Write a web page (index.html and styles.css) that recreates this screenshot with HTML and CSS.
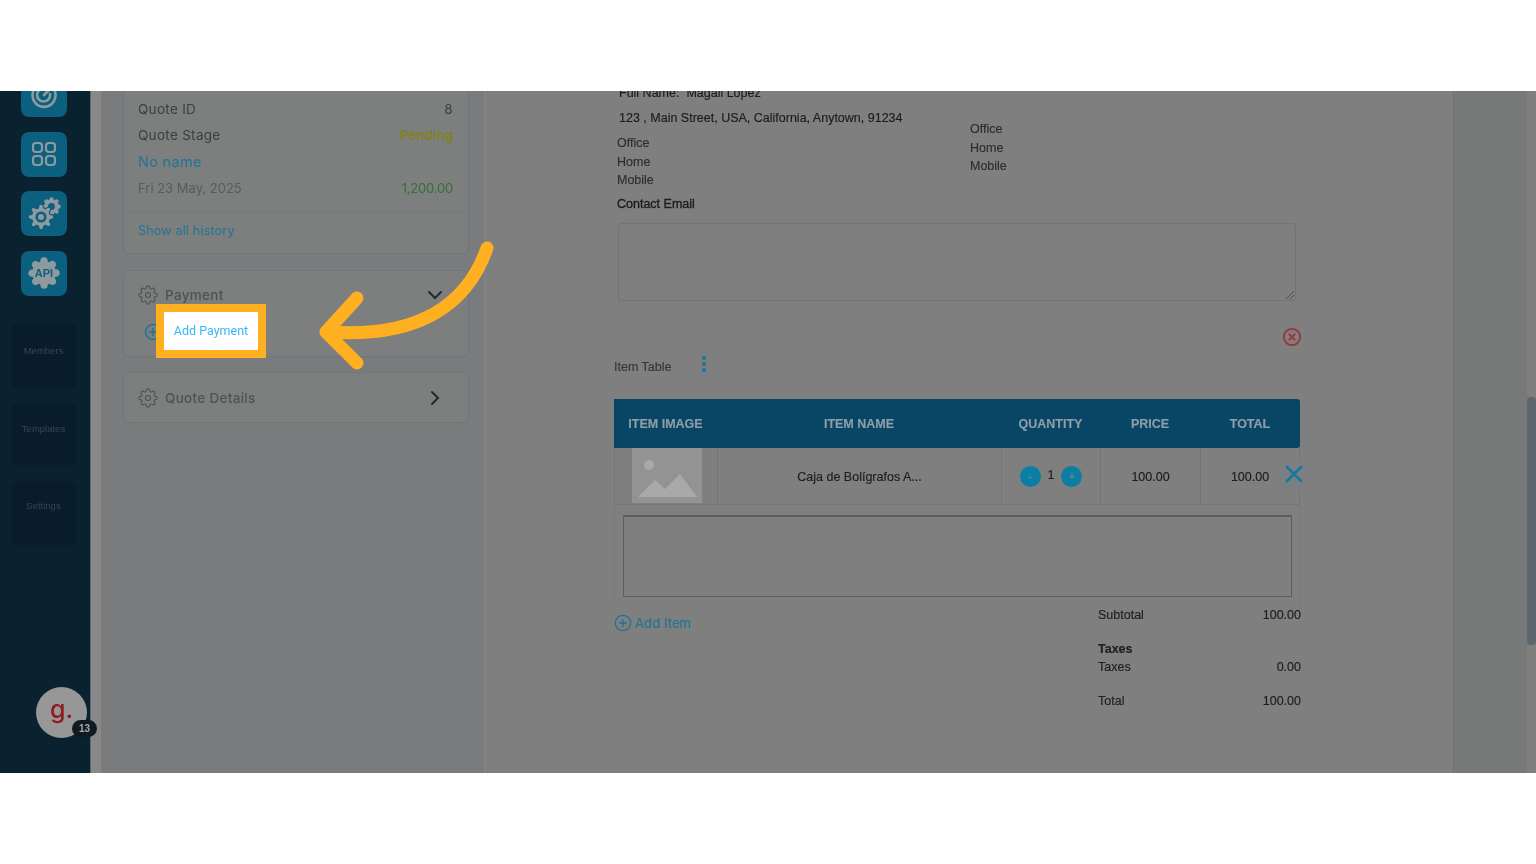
FILE: index.html
```html
<!DOCTYPE html>
<html lang="en">
<head>
  <meta charset="UTF-8">
  <title>Quote - Add Payment</title>
  <link rel="stylesheet" href="styles.css">
</head>
<body>

  <svg class="defs" width="0" height="0">
    <symbol id="gear" viewBox="0 0 24 24">
      <path d="M19.4 15a1.65 1.65 0 0 0 .33 1.82l.06.06a2 2 0 0 1 0 2.83 2 2 0 0 1-2.83 0l-.06-.06a1.65 1.65 0 0 0-1.82-.33 1.65 1.65 0 0 0-1 1.51V21a2 2 0 0 1-2 2 2 2 0 0 1-2-2v-.09A1.65 1.65 0 0 0 9 19.4a1.65 1.65 0 0 0-1.82.33l-.06.06a2 2 0 0 1-2.83 0 2 2 0 0 1 0-2.83l.06-.06a1.65 1.65 0 0 0 .33-1.82 1.65 1.65 0 0 0-1.51-1H3a2 2 0 0 1-2-2 2 2 0 0 1 2-2h.09A1.65 1.65 0 0 0 4.6 9a1.65 1.65 0 0 0-.33-1.82l-.06-.06a2 2 0 0 1 0-2.83 2 2 0 0 1 2.83 0l.06.06a1.65 1.65 0 0 0 1.82.33H9a1.65 1.65 0 0 0 1-1.51V3a2 2 0 0 1 2-2 2 2 0 0 1 2 2v.09a1.65 1.65 0 0 0 1 1.51 1.65 1.65 0 0 0 1.82-.33l.06-.06a2 2 0 0 1 2.83 0 2 2 0 0 1 0 2.83l-.06.06a1.65 1.65 0 0 0-.33 1.82V9a1.65 1.65 0 0 0 1.51 1H21a2 2 0 0 1 2 2 2 2 0 0 1-2 2h-.09a1.65 1.65 0 0 0-1.51 1z"/>
    </symbol>
  </svg>

  <div class="band"></div>

  <div class="app">

    <!-- Sidebar -->
    <aside class="sidebar">
      <div class="tile tile-first">
        <svg width="30" height="30" viewBox="0 0 30 30" fill="none" stroke="#8f9a9f" stroke-width="2.6" stroke-linecap="round">
          <path d="M26 12a11.5 11.5 0 1 1-6-7"/>
          <path d="M21 14a6.5 6.5 0 1 1-4-5"/>
          <path d="M15 15l8-8"/>
        </svg>
      </div>
      <div class="tile">
        <svg width="26" height="26" viewBox="0 0 26 26" fill="none" stroke="#8f9a9f" stroke-width="2.2">
          <rect x="2" y="2" width="9" height="9" rx="3"/>
          <rect x="15" y="2" width="9" height="9" rx="3"/>
          <rect x="2" y="15" width="9" height="9" rx="3"/>
          <rect x="15" y="15" width="9" height="9" rx="3"/>
        </svg>
      </div>
      <div class="tile">
        <svg width="38" height="38" viewBox="0 0 38 38">
          <use href="#gear" x="17" y="2" width="19" height="19" fill="#8f9a9f" stroke="#8f9a9f" stroke-width="1.5"/>
          <circle cx="26.5" cy="11.5" r="3.4" fill="#0b5f7f"/>
          <use href="#gear" x="2" y="8" width="28" height="28" fill="#8f9a9f" stroke="#0b5f7f" stroke-width="1"/>
          <circle cx="16" cy="22" r="5.6" fill="#0b5f7f"/>
          <circle cx="16" cy="22" r="3" fill="#8f9a9f"/>
        </svg>
      </div>
      <div class="tile">
        <svg width="34" height="34" viewBox="0 0 34 34">
          <use href="#gear" x="1" y="1" width="32" height="32" fill="#8f9a9f" stroke="#8f9a9f" stroke-width="1.5"/>
          <circle cx="17" cy="17" r="11.5" fill="#8f9a9f"/>
          <text x="17" y="21" class="api-text">API</text>
        </svg>
      </div>

      <div class="side-links">
        <div class="side-link">Members</div>
        <div class="side-link">Templates</div>
        <div class="side-link">Settings</div>
      </div>

      <div class="avatar">
        <span class="avatar-letter">g.</span>
        <span class="avatar-badge">13</span>
      </div>
    </aside>

    <div class="strip"></div>

    <!-- Quote panel -->
    <section class="panel">
      <div class="card card-history">
        <div class="history-rows">
          <div class="row"><span>Quote ID</span><span>8</span></div>
          <div class="row"><span>Quote Stage</span><span class="pending">Pending</span></div>
          <div class="row"><span class="link">No name</span></div>
          <div class="row muted"><span>Fri 23 May, 2025</span><span class="amount">1,200.00</span></div>
        </div>
        <div class="history-foot">Show all history</div>
      </div>

      <div class="card card-payment">
        <div class="card-head">
          <svg class="gear-icon" viewBox="0 0 24 24"><use href="#gear"/><circle cx="12" cy="12" r="3"/></svg>
          <span class="card-title">Payment</span>
          <svg class="chev" width="16" height="16" viewBox="0 0 16 16"><path d="M2 5l6 6 6-6"/></svg>
        </div>
        <div class="add-payment">
          <svg class="plus-circle" width="18" height="18" viewBox="0 0 18 18"><circle cx="9" cy="9" r="7.5"/><path d="M9 5v8M5 9h8"/></svg>
        </div>
      </div>

      <div class="card card-details">
        <svg class="gear-icon" viewBox="0 0 24 24"><use href="#gear"/><circle cx="12" cy="12" r="3"/></svg>
        <span class="card-title">Quote Details</span>
        <svg class="chev" width="16" height="16" viewBox="0 0 16 16"><path d="M5 2l6 6-6 6"/></svg>
      </div>
    </section>

    <!-- Quote document -->
    <main class="doc">
      <div class="full-name">Full Name:&nbsp; Magali Lopez</div>
      <div class="address">123 , Main Street, USA, California, Anytown, 91234</div>

      <div class="contacts">
        <div class="contact-col contact-left">
          <div>Office</div>
          <div>Home</div>
          <div>Mobile</div>
        </div>
        <div class="contact-col">
          <div>Office</div>
          <div>Home</div>
          <div>Mobile</div>
        </div>
      </div>

      <div class="email-label">Contact Email</div>
      <div class="email-box">
        <svg class="grip" width="10" height="10" viewBox="0 0 10 10"><path d="M9 1L1 9M9 5L5 9"/></svg>
      </div>

      <div class="remove-row">
        <svg width="20" height="20" viewBox="0 0 20 20"><circle cx="10" cy="10" r="8.2"/><path d="M6.8 6.8l6.4 6.4M13.2 6.8l-6.4 6.4"/></svg>
      </div>

      <div class="table-label">
        <span>Item Table</span>
        <span class="dots"><i></i><i></i><i></i></span>
      </div>

      <div class="table">
        <div class="table-head">
          <div class="c-image">ITEM IMAGE</div>
          <div class="c-name">ITEM NAME</div>
          <div class="c-qty">QUANTITY</div>
          <div class="c-price">PRICE</div>
          <div class="c-total">TOTAL</div>
        </div>
        <div class="table-row">
          <div class="c-image">
            <svg class="thumb" width="70" height="55" viewBox="0 0 70 55">
              <rect width="70" height="55" fill="#939393"/>
              <circle cx="17" cy="17" r="5" fill="#a9a9a9"/>
              <path d="M6 49l17-17 10 9 15-15 17 23z" fill="#a9a9a9"/>
            </svg>
          </div>
          <div class="c-name">Caja de Bolígrafos A...</div>
          <div class="c-qty">
            <span class="qty-btn">-</span>
            <span class="qty-val">1</span>
            <span class="qty-btn">+</span>
          </div>
          <div class="c-price">100.00</div>
          <div class="c-total">100.00</div>
          <div class="row-close">
            <svg width="18" height="18" viewBox="0 0 18 18"><path d="M2 2l14 14M16 2L2 16"/></svg>
          </div>
        </div>
        <div class="note-wrap">
          <div class="note-box"></div>
        </div>
      </div>

      <div class="foot">
        <div class="add-item">
          <svg width="18" height="18" viewBox="0 0 18 18"><circle cx="9" cy="9" r="7.7"/><path d="M9 5v8M5 9h8"/></svg>
          <span>Add Item</span>
        </div>
        <div class="summary">
          <div class="sum-row"><span>Subtotal</span><span>100.00</span></div>
          <div class="sum-row sum-head">Taxes</div>
          <div class="sum-row sum-tight"><span>Taxes</span><span>0.00</span></div>
          <div class="sum-row sum-total"><span>Total</span><span>100.00</span></div>
        </div>
      </div>
    </main>

    <div class="side-gutter"></div>
    <div class="scrollbar"><div class="thumb-bar"></div></div>

    <!-- Callout over the page -->
    <div class="callout">Add Payment</div>
    <svg class="arrow" width="190" height="140" viewBox="0 0 190 140" fill="none">
      <path d="M170 10C150 68 100 100 12 94" />
      <path d="M40 60L9 94l31 31" />
    </svg>
  </div>

  <div class="band"></div>

</body>
</html>
```

FILE: styles.css
```css
/* General Styles */
body {
  margin: 0;
  background: #fff;
  font-family: "Liberation Sans", Arial, sans-serif;
  color: #1c1c1c;
}

.defs {
  position: absolute;
}

.band {
  height: 91px;
  background: #fff;
}

.app {
  position: relative;
  display: flex;
  height: 682px;
  overflow: hidden;
  background: #7f7f7f;
  filter: blur(0.4px);
}

/* Sidebar */
.sidebar {
  position: relative;
  flex: 0 0 91px;
  display: flex;
  flex-direction: column;
  align-items: center;
  box-sizing: border-box;
  padding-right: 3px;
  background: #0a2130;
  border-right: 1px solid #5b6a75;
}

.tile {
  display: flex;
  justify-content: center;
  align-items: center;
  flex: 0 0 45px;
  width: 46px;
  margin-bottom: 14.5px;
  border-radius: 8px;
  background: #0b5f7f;
}

.tile-first {
  margin-top: -19px;
}

.api-text {
  font-family: "Liberation Sans", Arial, sans-serif;
  font-size: 11px;
  font-weight: 700;
  fill: #0b5f7f;
  text-anchor: middle;
}

.side-links {
  display: flex;
  flex-direction: column;
  margin-top: 14px;
  gap: 14.5px;
}

.side-link {
  display: flex;
  justify-content: center;
  align-items: center;
  box-sizing: border-box;
  width: 64px;
  height: 64px;
  padding-bottom: 12px;
  border-radius: 6px;
  background: #091c2a;
  color: #364654;
  font-size: 9.5px;
}

.side-link:last-child {
  padding-bottom: 16px;
}

.avatar {
  position: absolute;
  left: 36px;
  top: 596px;
  width: 51px;
  height: 51px;
  display: flex;
  justify-content: center;
  align-items: center;
  border-radius: 50%;
  background: #979797;
}

.avatar-letter {
  color: #8e1c20;
  font-family: Inter, sans-serif;
  font-size: 25px;
  font-weight: 500;
  line-height: 1;
  margin-top: -6px;
}

.avatar-badge {
  position: absolute;
  left: 36px;
  top: 33px;
  width: 25px;
  height: 17px;
  border-radius: 9px;
  background: #101a22;
  color: #a9a9a9;
  font-size: 10px;
  font-weight: 700;
  line-height: 17px;
  text-align: center;
}

.strip {
  flex: 0 0 10px;
  background: #888;
}

/* Quote panel */
.panel {
  flex: 0 0 384px;
  box-sizing: border-box;
  padding: 0 15px 0 22px;
  background: #797b7c;
  border-right: 1px solid #858787;
  font-family: Inter, sans-serif;
  font-size: 13.5px;
  letter-spacing: 0.3px;
  color: #3a3f44;
}

.card {
  box-sizing: border-box;
  width: 346px;
  background: #7d7e7e;
  border: 1px solid #707679;
  border-radius: 6px;
}

.card-history {
  margin-top: -10px;
  height: 173px;
  margin-bottom: 16px;
}

.history-rows {
  height: 130px;
  padding: 14px 15px 0 14px;
  box-sizing: border-box;
  border-bottom: 1px solid #74797b;
}

.row {
  display: flex;
  justify-content: space-between;
  align-items: center;
  height: 26.3px;
}

.pending {
  color: #7f8410;
  font-weight: 500;
  letter-spacing: 0.1px;
}

.link {
  color: #1f7596;
  font-size: 14.5px;
}

.muted {
  color: #585b5e;
  font-size: 13px;
  letter-spacing: 0;
}

.amount {
  color: #2f7434;
  letter-spacing: -0.2px;
}

.history-foot {
  padding: 11px 14px;
  color: #1f7596;
  font-size: 12.5px;
  letter-spacing: 0.2px;
}

.card-payment {
  height: 87px;
  margin-bottom: 15px;
}

.card-head {
  display: flex;
  align-items: center;
  height: 48px;
  padding: 0 25px 0 14px;
}

.gear-icon {
  width: 20px;
  height: 20px;
  fill: none;
  stroke: #4d5256;
  stroke-width: 1.3;
}

.card-title {
  flex: 1;
  margin-left: 7px;
  color: #4d5256;
  font-weight: 500;
}

.chev {
  fill: none;
  stroke: #1f2a38;
  stroke-width: 2;
  stroke-linecap: round;
}

.add-payment {
  padding-left: 20px;
  margin-top: 4px;
}

.plus-circle {
  fill: none;
  stroke: #1f7596;
  stroke-width: 1.5;
}

.card-details {
  display: flex;
  align-items: center;
  height: 51px;
  padding: 0 25px 0 14px;
}

/* Quote document */
.doc {
  flex: 0 0 968px;
  box-sizing: border-box;
  padding-left: 129px;
  background: #7f7f7f;
  font-size: 12.5px;
  line-height: 14px;
  -webkit-text-stroke: 0.15px;
}

.full-name {
  margin: -5px 0 0 5px;
}

.address {
  margin: 11px 0 0 5px;
}

.contacts {
  display: flex;
  margin: -5px 0 0 3px;
  color: #2e2e2e;
}

.contact-col {
  line-height: 18.5px;
}

.contact-left {
  width: 353px;
  padding-top: 14px;
}

.email-label {
  margin: 7px 0 0 3px;
  -webkit-text-stroke: 0.35px;
}

.email-box {
  position: relative;
  box-sizing: border-box;
  width: 678px;
  height: 78px;
  margin: 12px 0 0 4px;
  border: 1px solid #6f7476;
  border-radius: 3px;
}

.grip {
  position: absolute;
  right: 0;
  bottom: 0;
  fill: none;
  stroke: #4f4f4f;
}

.remove-row {
  display: flex;
  justify-content: flex-end;
  width: 688px;
  margin-top: 26px;
  height: 20px;
}

.remove-row svg {
  fill: none;
  stroke: #9c3236;
  stroke-width: 1.8;
}

.table-label {
  display: flex;
  align-items: center;
  height: 20px;
  margin-top: 10px;
  color: #33383d;
}

.dots {
  display: flex;
  flex-direction: column;
  gap: 2.5px;
  margin: -5px 0 0 31px;
}

.dots i {
  width: 3.5px;
  height: 3.5px;
  border-radius: 50%;
  background: #1878a6;
}

.table {
  width: 686px;
  margin-top: 22px;
}

.table-head,
.table-row {
  position: relative;
  display: grid;
  grid-template-columns: 103px 284px 99px 100px 100px;
  align-items: center;
  text-align: center;
}

.table-head {
  box-sizing: border-box;
  height: 49px;
  padding-top: 1px;
  background: #094665;
  border-radius: 0 3px 3px 0;
  color: #8d9ea8;
  font-weight: 700;
}

.table-row {
  height: 56px;
  border-bottom: 1px solid #757575;
  color: #1d1d1d;
}

.table-row > div {
  display: flex;
  justify-content: center;
  align-items: center;
  height: 100%;
  box-sizing: border-box;
  padding-top: 2px;
  border-left: 1px solid #757575;
}

.table-row > .c-image {
  align-items: flex-start;
  padding: 0 0 0 2px;
}

.table-row > .c-total {
  border-right: 1px solid #757575;
}

.thumb {
  display: block;
}

.c-qty {
  gap: 7px;
}

.qty-btn {
  width: 21px;
  height: 21px;
  border-radius: 50%;
  background: #0c7ea3;
  color: #5d8795;
  font-size: 11px;
  font-weight: 700;
  line-height: 21px;
}

.qty-val {
  margin-top: -3px;
}

.table-row > .row-close {
  position: absolute;
  left: 664px;
  top: 10px;
  width: 32px;
  height: 32px;
  padding: 0;
  border: 0;
  border-radius: 50%;
  background: #7a7f83;
}

.row-close svg {
  fill: none;
  stroke: #17789f;
  stroke-width: 2.6;
  stroke-linecap: round;
}

.note-wrap {
  height: 100px;
  box-sizing: border-box;
  padding: 10px 7px 0 8px;
  border: 1px solid #7a7a7a;
  border-top: 0;
  border-bottom: 0;
}

.note-box {
  box-sizing: border-box;
  height: 82px;
  border: 1px solid #5d5d5d;
  border-top-width: 2px;
}

.foot {
  display: flex;
  justify-content: space-between;
  width: 687px;
  margin-top: -1px;
}

.add-item {
  display: flex;
  align-items: center;
  gap: 3px;
  height: 18px;
  margin-top: 10px;
  color: #1f7596;
  font-family: Inter, sans-serif;
  font-size: 13.2px;
}

.add-item svg {
  fill: none;
  stroke: #1f7596;
  stroke-width: 1.3;
}

.summary {
  width: 203px;
}

.sum-row {
  display: flex;
  justify-content: space-between;
  height: 14px;
  margin-top: 4px;
  color: #202020;
}

.sum-head {
  margin-top: 20px;
  font-weight: 700;
}

.sum-row.sum-tight {
  margin-top: 4px;
}

.sum-total {
  margin-top: 20px;
}

.side-gutter {
  flex: 0 0 73px;
  background: #777979;
  border-left: 1px solid #6e7272;
}

.scrollbar {
  flex: 1;
  padding-top: 306px;
  background: #7e7e7e;
}

.thumb-bar {
  height: 248px;
  border-radius: 4px;
  background: #5e666d;
}

/* Callout over the page */
.callout {
  position: absolute;
  left: 156px;
  top: 213px;
  box-sizing: border-box;
  width: 110px;
  height: 54px;
  border: 8px solid #ffb020;
  background: #fff;
  color: #38b6f5;
  font-family: Roboto, sans-serif;
  font-size: 12.5px;
  line-height: 37px;
  text-align: center;
}

.arrow {
  position: absolute;
  left: 317px;
  top: 147px;
  stroke: #ffb020;
  stroke-width: 13;
  stroke-linecap: round;
  stroke-linejoin: round;
}
```
